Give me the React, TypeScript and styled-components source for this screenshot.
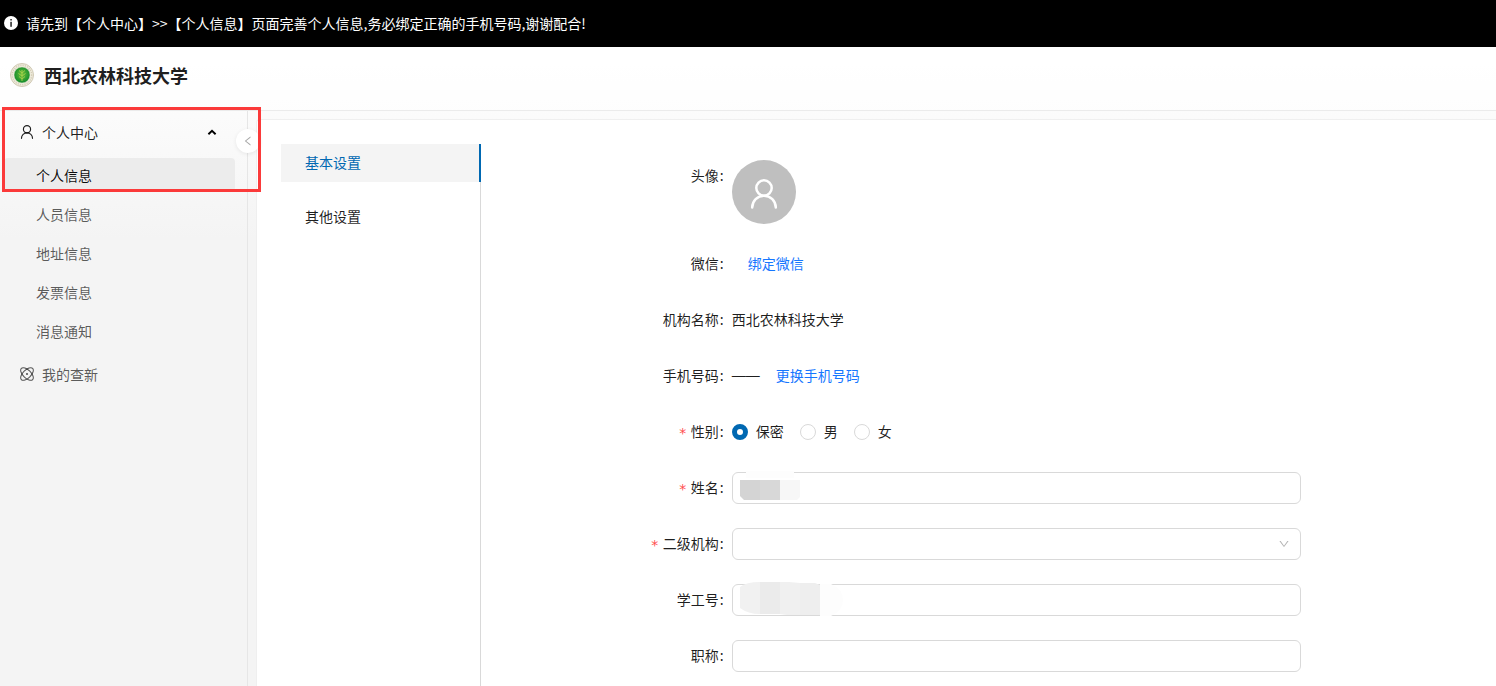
import React from "react";
import styled, { createGlobalStyle } from "styled-components";
import { AiOutlineLeft, AiOutlineDown } from "react-icons/ai";

const GlobalStyle = createGlobalStyle`
  *, *::before, *::after { box-sizing: border-box; }
  body {
    margin: 0;
    font-family: "Noto Sans CJK SC", "Liberation Sans", sans-serif;
    font-size: 14px;
    line-height: 22px;
    color: rgba(0, 0, 0, 0.88);
    background: #f5f5f5;
  }
  button, input, select { font: inherit; color: inherit; }
  ul { list-style: none; margin: 0; padding: 0; }
`;

const Page = styled.div`
  position: relative;
  display: flex;
  flex-direction: column;
  min-height: 100vh;
`;

const Banner = styled.div`
  display: flex;
  align-items: center;
  gap: 8px;
  height: 47px;
  padding: 0 4px 2px;
  background: #000;
  color: #fff;
`;

const Shell = styled.div`
  flex: 1;
  display: flex;
  flex-direction: column;
  background: linear-gradient(#fff, #f4f4f4 30%);
`;

const Header = styled.header`
  display: flex;
  align-items: center;
  gap: 10px;
  height: 64px;
  padding: 0 10px 8px;
  background: rgba(255, 255, 255, 0.6);
  border-bottom: 1px solid #ebebeb;
`;

const Title = styled.h1`
  margin: 0;
  font-size: 18px;
  line-height: 26px;
  font-weight: 600;
`;

const Body = styled.div`
  flex: 1;
  display: flex;
`;

const Sider = styled.nav`
  position: relative;
  flex: none;
  width: 248px;
  padding: 2px 12px 0 4px;
  border-right: 1px solid #e6e6e6;
`;

const GroupButton = styled.button<{ $muted?: boolean }>`
  display: flex;
  align-items: center;
  gap: 8px;
  width: 100%;
  height: 40px;
  padding: 0 18px 2px 16px;
  border: 0;
  background: none;
  text-align: left;
  cursor: pointer;
  color: ${(p) => (p.$muted ? "rgba(0, 0, 0, 0.65)" : "rgba(0, 0, 0, 0.88)")};
  svg { flex: none; }
  span { flex: 1; }
`;

const SubMenu = styled.ul`
  display: flex;
  flex-direction: column;
  gap: 5px;
  padding: 5px 0 7px;
`;

const SubLink = styled.a<{ $active?: boolean }>`
  display: flex;
  align-items: center;
  height: 34px;
  padding-left: 32px;
  border-radius: 4px;
  text-decoration: none;
  color: ${(p) => (p.$active ? "rgba(0, 0, 0, 0.95)" : "rgba(0, 0, 0, 0.65)")};
  background: ${(p) => (p.$active ? "#ececec" : "transparent")};
`;

const CollapseButton = styled.button`
  position: absolute;
  z-index: 1;
  top: 18px;
  right: -13px;
  display: flex;
  align-items: center;
  justify-content: center;
  width: 24px;
  height: 24px;
  padding: 0;
  border: 0;
  border-radius: 50%;
  background: #fff;
  color: rgba(0, 0, 0, 0.35);
  box-shadow: 0 1px 4px rgba(0, 0, 0, 0.08);
  cursor: pointer;
`;

const Main = styled.main`
  flex: 1;
  min-width: 0;
  display: flex;
  margin: 8px 0 0 8px;
  padding: 24px 0 0 24px;
  background: #fff;
  border: solid #efefef;
  border-width: 1px 0 0 1px;
  border-top-left-radius: 4px;
`;

const Tabs = styled.ul`
  flex: none;
  display: flex;
  flex-direction: column;
  gap: 16px;
  width: 200px;
  border-right: 1px solid #d9d9d9;
`;

const TabLink = styled.a<{ $active?: boolean }>`
  position: relative;
  display: flex;
  align-items: center;
  height: 38px;
  padding: 0 24px 2px;
  margin-right: -1px;
  border-right: 2px solid ${(p) => (p.$active ? "#0068b2" : "transparent")};
  background: ${(p) => (p.$active ? "#f4f4f4" : "none")};
  color: ${(p) => (p.$active ? "#0068b2" : "inherit")};
  text-decoration: none;
`;

const Form = styled.form`
  flex: 1;
  display: flex;
  flex-direction: column;
  gap: 24px;
  padding: 16px 24px 0 23px;
`;

const Row = styled.div`
  display: grid;
  grid-template-columns: 8fr 20fr 6fr;
`;

const LabelCell = styled.div<{ $required?: boolean }>`
  display: flex;
  align-items: center;
  justify-content: flex-end;
  height: 32px;
  padding: 0 8px 2px 0;
  white-space: nowrap;
  &::before {
    content: "*";
    display: ${(p) => (p.$required ? "block" : "none")};
    margin-right: 4px;
    padding-top: 4px;
    color: #ff4d4f;
    font-family: "DejaVu Sans Mono", monospace;
  }
  &::after {
    content: ":";
    margin-left: 1px;
  }
`;

const Control = styled.div`
  position: relative;
  display: flex;
  align-items: center;
  gap: 16px;
  min-height: 32px;
`;

const TextControl = styled(Control)`
  padding-bottom: 2px;
`;

const Dash = styled.span`
  font-family: "Liberation Sans", sans-serif;
`;

const Avatar = styled.div`
  display: flex;
  align-items: center;
  justify-content: center;
  width: 64px;
  height: 64px;
  padding-top: 4px;
  border-radius: 50%;
  background: #bfbfbf;
  color: #fff;
`;

const ActionLink = styled.a<{ $indent?: boolean }>`
  color: #1677ff;
  text-decoration: none;
  margin-left: ${(p) => (p.$indent ? "16px" : "0")};
`;

const RadioLabel = styled.label`
  display: flex;
  align-items: center;
  gap: 8px;
  span { padding-bottom: 2px; }
`;

const Radio = styled.input`
  appearance: none;
  width: 16px;
  height: 16px;
  margin: 0;
  border: 1px solid #d9d9d9;
  border-radius: 50%;
  background: #fff;
  &:checked { border: 5px solid #0068b2; }
`;

const TextInput = styled.input`
  width: 100%;
  height: 32px;
  padding: 4px 11px;
  border: 1px solid #d9d9d9;
  border-radius: 6px;
  background: #fff;
`;

const Select = styled.select`
  appearance: none;
  width: 100%;
  height: 32px;
  padding: 4px 11px;
  border: 1px solid #d9d9d9;
  border-radius: 6px;
  background: #fff;
`;

const SelectArrow = styled(AiOutlineDown)`
  position: absolute;
  right: 11px;
  top: 10px;
  color: rgba(0, 0, 0, 0.3);
  pointer-events: none;
`;

const Mask = styled.svg`
  position: absolute;
  left: 4px;
  top: -3px;
  pointer-events: none;
`;

const Highlight = styled.div`
  position: absolute;
  z-index: 2;
  left: 2px;
  top: 107px;
  width: 259px;
  height: 85px;
  border: 3px solid #fb3a3a;
  pointer-events: none;
`;

const InfoIcon = () => (
  <svg width="14" height="14" viewBox="0 0 14 14" aria-hidden="true">
    <circle cx="7" cy="7" r="7" fill="#fff" />
    <rect x="6.4" y="3" width="1.3" height="1.5" fill="#000" />
    <rect x="6.4" y="5.8" width="1.3" height="5" fill="#000" />
  </svg>
);

const UserIcon = ({ size }: { size: number }) => (
  <svg width={size} height={size} viewBox="0 0 30 30" fill="none" stroke="currentColor" strokeWidth="2.5" strokeLinecap="round" aria-hidden="true">
    <circle cx="15" cy="9" r="7.7" />
    <path d="M3.2 28.5a11.8 11.8 0 0 1 23.6 0" />
  </svg>
);

const Crest = () => (
  <svg width="24" height="24" viewBox="0 0 24 24" aria-hidden="true">
    <defs>
      <radialGradient id="crest" cx="0.5" cy="0.45" r="0.55">
        <stop offset="0" stopColor="#6cc03a" />
        <stop offset="1" stopColor="#0f8a2b" />
      </radialGradient>
    </defs>
    <circle cx="12" cy="12" r="11.5" fill="#efebdd" stroke="#d0c9b4" strokeWidth="1" />
    <circle cx="12" cy="12" r="9.7" fill="none" stroke="#d6cfb8" strokeWidth="1.4" strokeDasharray="1.2 1.1" />
    <circle cx="12" cy="12" r="8" fill="url(#crest)" stroke="#e4e2cf" strokeWidth="0.5" />
    <path d="M12 18V7M12 10l-3-2.5M12 10l3-2.5M12 13l-3.5-2.5M12 13l3.5-2.5M12 16l-3-2.5M12 16l3-2.5" stroke="#a9cf4c" strokeWidth="0.9" fill="none" />
  </svg>
);

const CaretUp = () => (
  <svg width="10" height="10" viewBox="0 0 10 10" fill="none" aria-hidden="true">
    <path d="M1.4 7.3L5 3.8l3.6 3.5" stroke="#000" strokeWidth="1.9" />
  </svg>
);

const AtomIcon = () => (
  <svg width="14" height="14" viewBox="0 0 14 14" fill="none" stroke="currentColor" aria-hidden="true">
    <ellipse cx="7" cy="7" rx="8" ry="4" transform="rotate(45 7 7)" />
    <ellipse cx="7" cy="7" rx="8" ry="4" transform="rotate(-45 7 7)" />
    <circle cx="7" cy="7" r="1.1" fill="currentColor" stroke="none" />
  </svg>
);

const subItems = ["个人信息", "人员信息", "地址信息", "发票信息", "消息通知"];
const genders = ["保密", "男", "女"];

export default function App() {
  return (
    <>
      <GlobalStyle />
      <Page lang="zh-CN">
        <Banner role="status">
          <InfoIcon />
          <span>请先到【个人中心】&gt;&gt;【个人信息】页面完善个人信息,务必绑定正确的手机号码,谢谢配合!</span>
        </Banner>
        <Shell>
          <Header>
            <Crest />
            <Title>西北农林科技大学</Title>
          </Header>
          <Body>
            <Sider>
              <GroupButton type="button" aria-expanded="true">
                <UserIcon size={14} />
                <span>个人中心</span>
                <CaretUp />
              </GroupButton>
              <SubMenu>
                {subItems.map((item, i) => (
                  <li key={item}>
                    <SubLink href="#" $active={i === 0}>{item}</SubLink>
                  </li>
                ))}
              </SubMenu>
              <GroupButton type="button" $muted>
                <AtomIcon />
                <span>我的查新</span>
              </GroupButton>
              <CollapseButton type="button" aria-label="收起菜单">
                <AiOutlineLeft size={12} />
              </CollapseButton>
            </Sider>
            <Main>
              <Tabs>
                <li><TabLink href="#" $active>基本设置</TabLink></li>
                <li><TabLink href="#">其他设置</TabLink></li>
              </Tabs>
              <Form>
                <Row>
                  <LabelCell>头像</LabelCell>
                  <Control>
                    <Avatar><UserIcon size={30} /></Avatar>
                  </Control>
                </Row>
                <Row>
                  <LabelCell>微信</LabelCell>
                  <TextControl><ActionLink href="#" $indent>绑定微信</ActionLink></TextControl>
                </Row>
                <Row>
                  <LabelCell>机构名称</LabelCell>
                  <TextControl>西北农林科技大学</TextControl>
                </Row>
                <Row>
                  <LabelCell>手机号码</LabelCell>
                  <TextControl>
                    <Dash>——</Dash>
                    <ActionLink href="#">更换手机号码</ActionLink>
                  </TextControl>
                </Row>
                <Row>
                  <LabelCell $required id="gender-label">性别</LabelCell>
                  <Control role="radiogroup" aria-labelledby="gender-label">
                    {genders.map((g, i) => (
                      <RadioLabel key={g}>
                        <Radio type="radio" name="gender" defaultChecked={i === 0} />
                        <span>{g}</span>
                      </RadioLabel>
                    ))}
                  </Control>
                </Row>
                <Row>
                  <LabelCell $required><label htmlFor="name">姓名</label></LabelCell>
                  <Control>
                    <TextInput id="name" type="text" />
                    <Mask width="66" height="34" viewBox="0 0 66 34" aria-hidden="true">
                      <path d="M10 2h48v7h-48z" fill="#fdfdfd" />
                      <path d="M4 11h20v20H8l-4-4z" fill="#d4d4d4" />
                      <path d="M24 11h20v20H24z" fill="#d8d8d8" />
                      <path d="M44 11h20v17l-3 3H44z" fill="#f7f7f7" />
                    </Mask>
                  </Control>
                </Row>
                <Row>
                  <LabelCell $required><label htmlFor="dept">二级机构</label></LabelCell>
                  <Control>
                    <Select id="dept"><option value=""></option></Select>
                    <SelectArrow size={12} />
                  </Control>
                </Row>
                <Row>
                  <LabelCell><label htmlFor="staff-no">学工号</label></LabelCell>
                  <Control>
                    <TextInput id="staff-no" type="text" />
                    <Mask width="110" height="36" viewBox="0 0 110 36" aria-hidden="true">
                      <path d="M84 3h11q12 5 12 16t-12 16H84z" fill="#fdfdfd" />
                      <path d="M4 6q6-5 20-5v32q-12 0-20-6z" fill="#f1f1f1" />
                      <path d="M24 1h20v32H24z" fill="#ebebeb" />
                      <path d="M44 1h9l11 1v32H51l-7-1z" fill="#f0f0f0" />
                      <path d="M64 2h15l5 2v30H64z" fill="#eee" />
                    </Mask>
                  </Control>
                </Row>
                <Row>
                  <LabelCell><label htmlFor="job-title">职称</label></LabelCell>
                  <Control><TextInput id="job-title" type="text" /></Control>
                </Row>
              </Form>
            </Main>
          </Body>
        </Shell>
        <Highlight />
      </Page>
    </>
  );
}
